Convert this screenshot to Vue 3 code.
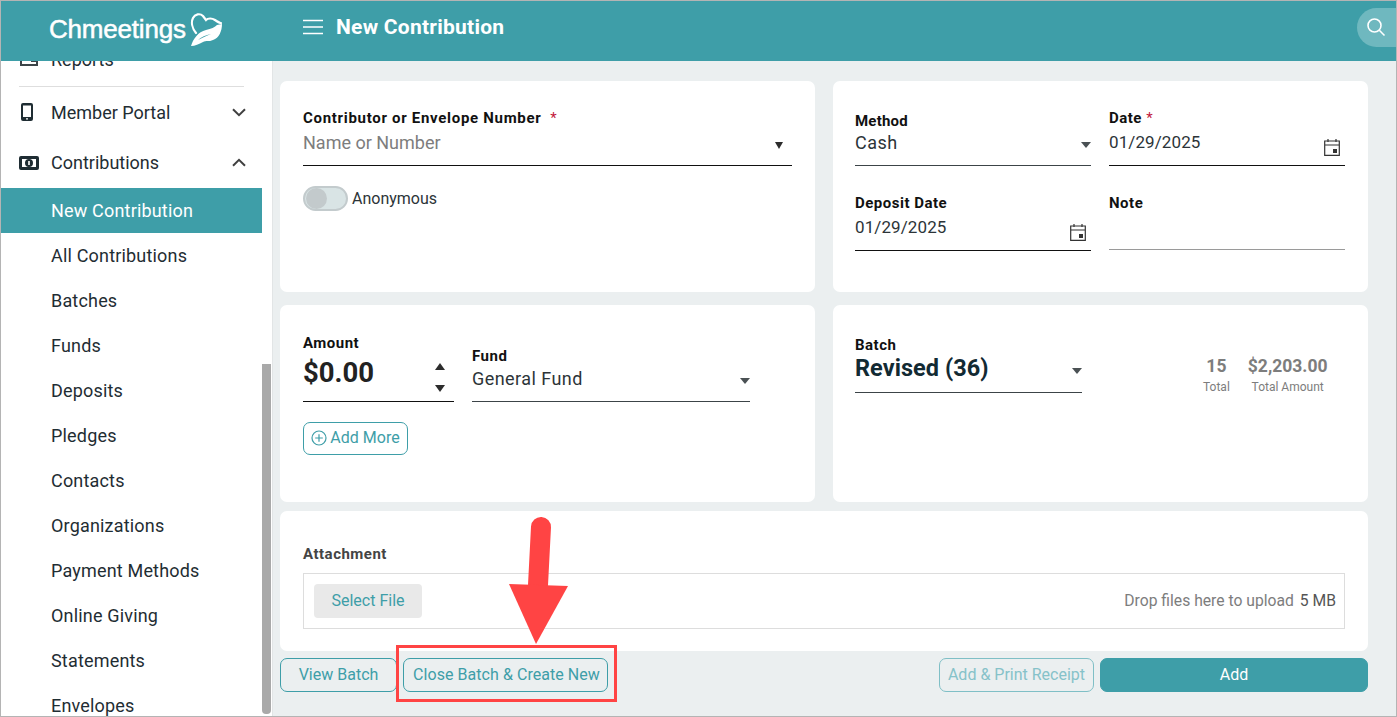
<template>
  <div class="page">
    <!-- Top bar -->
    <header class="topbar">
      <div class="logo">
        <span class="logo-text">Chmeetings</span>
        <svg class="logo-mark" viewBox="0 0 32 33" width="32" height="33">
          <path d="M6 20 C2 15 1 9 3 5 C5 1 10 0 13 3 L16 7 C18 5 22 5 25 7 C28 9 30 10 31 10" fill="none" stroke="#fff" stroke-width="2.2" stroke-linecap="round" />
          <path d="M1 33 C3 26 8 19 16 17 C21 16 25 14 27 12 L32 11 C32 18 29 25 23 27 C19 29 16 27 13 29 C9 31 5 33 1 33 Z M8 27 C12 25 16 23 21 21 C16 22 11 24 8 27 Z" fill="#fff" fill-rule="evenodd" />
        </svg>
      </div>
      <div class="title-wrap">
        <svg class="burger" viewBox="0 0 20 16" width="20" height="16">
          <path d="M0 1.5H20M0 8H20M0 14.5H20" stroke="#fff" stroke-width="1.7" />
        </svg>
        <span class="page-title">New Contribution</span>
      </div>
      <div class="search-pill">
        <svg viewBox="0 0 20 20" width="20" height="20">
          <circle cx="8.5" cy="8.5" r="6.5" fill="none" stroke="#fff" stroke-width="1.6" />
          <path d="M13.3 13.3L18.5 18.5" stroke="#fff" stroke-width="1.6" />
        </svg>
      </div>
    </header>

    <div class="body">
      <!-- Sidebar -->
      <aside class="sidebar">
        <nav class="nav">
          <div class="nav-row reports">
            <svg viewBox="0 0 20 20" width="20" height="20">
              <path d="M2 3H13V12H18V16H2Z" fill="none" stroke="#3c4448" stroke-width="2" />
              <path d="M5 11H11" stroke="#3c4448" stroke-width="2" />
            </svg>
            <span>Reports</span>
          </div>
          <div class="divider"></div>
          <div class="nav-row portal">
            <svg viewBox="0 0 20 20" width="20" height="20">
              <path fill-rule="evenodd" d="M4 1H12Q14 1 14 3V17Q14 19 12 19H4Q2 19 2 17V3Q2 1 4 1ZM4 3.5V15H12V3.5ZM7 16.2V17.6H9V16.2Z" fill="#1f2d33" />
            </svg>
            <span>Member Portal</span>
            <svg class="chev" viewBox="0 0 14 9" width="14" height="9"><path d="M1 1.2L7 7.2L13 1.2" fill="none" stroke="#404040" stroke-width="2" /></svg>
          </div>
          <div class="nav-row">
            <svg viewBox="0 0 20 14" width="20" height="14">
              <path fill-rule="evenodd" d="M2 0H18Q20 0 20 2V12Q20 14 18 14H2Q0 14 0 12V2Q0 0 2 0ZM3 3V11H17V3ZM10 3A4 4 0 1 1 10 11A4 4 0 1 1 10 3ZM9.200 5V9H10.800V5Z" fill="#1f2d33" />
            </svg>
            <span>Contributions</span>
            <svg class="chev" viewBox="0 0 14 9" width="14" height="9"><path d="M1 7.8L7 1.8L13 7.8" fill="none" stroke="#404040" stroke-width="2" /></svg>
          </div>
          <a
            v-for="item in subItems"
            :key="item"
            class="sub-row"
            :class="{ active: item === 'New Contribution' }"
          >{{ item }}</a>
        </nav>
        <div class="scroll-track"><div class="scroll-thumb"></div></div>
      </aside>

      <!-- Main form -->
      <main class="main">
        <div class="grid">
          <section class="card contributor">
            <div class="field">
              <label class="wide">Contributor or Envelope Number <em class="req">&nbsp;*</em></label>
              <div class="control placeholder">
                <span>Name or Number</span>
                <i class="caret dark low"></i>
              </div>
            </div>
            <div class="toggle-row">
              <span class="toggle"><span class="knob"></span></span>
              <span>Anonymous</span>
            </div>
          </section>

          <section class="card details">
            <div class="field method">
              <label>Method</label>
              <div class="control soft"><span>Cash</span><i class="caret"></i></div>
            </div>
            <div class="field date">
              <label>Date <em class="req">*</em></label>
              <div class="control date-text">
                <span>01/29/2025</span>
                <svg class="cal" viewBox="0 0 16 18" width="16" height="18">
                  <path d="M.7 3H15.3V17.3H.7ZM.7 7H15.3M4 1V4M12 1V4" fill="none" stroke="#333" stroke-width="1.2" />
                  <rect x="9" y="11" width="4" height="4" fill="#333" />
                </svg>
              </div>
            </div>
            <div class="field lower">
              <label>Deposit Date</label>
              <div class="control date-text">
                <span>01/29/2025</span>
                <svg class="cal" viewBox="0 0 16 18" width="16" height="18">
                  <path d="M.7 3H15.3V17.3H.7ZM.7 7H15.3M4 1V4M12 1V4" fill="none" stroke="#333" stroke-width="1.2" />
                  <rect x="9" y="11" width="4" height="4" fill="#333" />
                </svg>
              </div>
            </div>
            <div class="field lower">
              <label>Note</label>
              <div class="control empty"></div>
            </div>
          </section>

          <section class="card amounts">
            <div class="amount-row">
              <div class="field amount">
                <label>Amount</label>
                <div class="control big">
                  <span>$0.00</span>
                  <span class="spin"><i class="up"></i><i class="down"></i></span>
                </div>
              </div>
              <div class="field fund">
                <label>Fund</label>
                <div class="control soft"><span>General Fund</span><i class="caret"></i></div>
              </div>
            </div>
            <button class="btn add-more">
              <svg viewBox="0 0 16 16" width="16" height="16">
                <circle cx="8" cy="8" r="7" fill="none" stroke="#3e9ea8" stroke-width="1.2" />
                <path d="M8 4.2V11.8M4.2 8H11.8" stroke="#3e9ea8" stroke-width="1.2" />
              </svg>
              Add More
            </button>
          </section>

          <section class="card batch">
            <div class="field batch-field">
              <label>Batch</label>
              <div class="control soft batch-value"><span>Revised (36)</span><i class="caret"></i></div>
            </div>
            <div class="stats">
              <div v-for="s in stats" :key="s.label" class="stat">
                <strong>{{ s.value }}</strong>
                <span>{{ s.label }}</span>
              </div>
            </div>
          </section>
        </div>

        <section class="card attachment">
          <div class="attach-label">Attachment</div>
          <div class="dropzone">
            <button class="select-file">Select File</button>
            <div class="drop-hint">Drop files here to upload <b>5 MB</b></div>
          </div>
        </section>

        <div class="actions">
          <button class="btn view">View Batch</button>
          <button class="btn close">Close Batch &amp; Create New</button>
          <div class="actions-gap"></div>
          <button class="btn print">Add &amp; Print Receipt</button>
          <button class="btn primary">Add</button>
        </div>
      </main>
    </div>

    <!-- Screenshot annotation -->
    <div class="mark-box"></div>
    <svg class="mark-arrow" viewBox="0 0 62 130" width="62" height="130">
      <path d="M34 12L31 70" stroke="#ff4444" stroke-width="20" stroke-linecap="round" fill="none" />
      <path d="M2 69L61 71L29 129Z" fill="#ff4444" />
    </svg>
  </div>
</template>

<script setup>
const subItems = [
  "New Contribution",
  "All Contributions",
  "Batches",
  "Funds",
  "Deposits",
  "Pledges",
  "Contacts",
  "Organizations",
  "Payment Methods",
  "Online Giving",
  "Statements",
  "Envelopes"
];

const stats = [
  { value: "15", label: "Total" },
  { value: "$2,203.00", label: "Total Amount" }
];
</script>

<style>
html,
body {
  margin: 0;
  overflow: hidden;
}
</style>

<style scoped>
.page {
  position: relative;
  width: 1397px;
  height: 717px;
  box-sizing: border-box;
  border: 1px solid #b4b4b4;
  display: flex;
  flex-direction: column;
  overflow: hidden;
  background: #ebeff0;
  font-family: Roboto, "Liberation Sans", sans-serif;
  color: #1f2d33;
}

.topbar {
  flex: 0 0 60px;
  display: flex;
  align-items: center;
  background: #3e9ea8;
  color: #fff;
  position: relative;
  z-index: 2;
}

.logo {
  width: 302px;
  padding-left: 48px;
  box-sizing: border-box;
  display: flex;
  align-items: center;
  gap: 4px;
}

.logo-text {
  font-family: "Liberation Sans", sans-serif;
  font-size: 26px;
  letter-spacing: -0.2px;
  -webkit-text-stroke: 0.5px #fff;
  margin-top: -3px;
}

.logo-mark {
  margin-top: -3px;
}

.title-wrap {
  display: flex;
  align-items: center;
  gap: 13px;
  flex: 1;
  margin-top: -8px;
}

.page-title {
  font-size: 21px;
  font-weight: 700;
  letter-spacing: 0.25px;
}

.search-pill {
  width: 39px;
  height: 39px;
  margin-top: -8px;
  border-radius: 20px 0 0 20px;
  background: #6fb8bf;
  display: flex;
  align-items: center;
  padding-left: 9px;
  box-sizing: border-box;
}

.body {
  flex: 1;
  display: flex;
  min-height: 0;
}

/* Sidebar */
.sidebar {
  width: 271px;
  display: flex;
  background: #fff;
  overflow: hidden;
  border-right: 1px solid #e2e5e6;
  box-sizing: content-box;
}

.nav {
  width: 261px;
  margin-top: -29px;
  flex: none;
}

.nav-row {
  height: 51px;
  display: flex;
  align-items: center;
  padding-left: 18px;
  padding-right: 16px;
  font-size: 18px;
  gap: 12px;
}

.nav-row span {
  flex: 1;
}

.reports {
  height: 54px;
}

.portal {
  height: 50px;
}

.divider {
  height: 1px;
  margin: 0 18px;
  background: #dedede;
}

.sub-row {
  display: block;
  height: 45px;
  line-height: 45px;
  padding-left: 50px;
  font-size: 18px;
  letter-spacing: 0.18px;
}

.sub-row.active {
  background: #3e9ea8;
  color: #fff;
}

.scroll-track {
  width: 10px;
  flex: none;
  padding-top: 303px;
  box-sizing: border-box;
}

.scroll-thumb {
  width: 9px;
  height: 350px;
  margin-left: 0;
  background: #a9a9a9;
  border-radius: 0 0 4px 4px;
}

/* Main column */
.main {
  flex: 1;
  padding: 20px 28px 0 7px;
  box-sizing: border-box;
  min-width: 0;
}

.grid {
  display: grid;
  grid-template-columns: 535px 535px;
  grid-template-rows: 211px 197px;
  column-gap: 18px;
  row-gap: 13px;
}

.card {
  background: #fff;
  border-radius: 7px;
  box-sizing: border-box;
}

.field label {
  display: block;
  font-size: 15px;
  font-weight: 700;
  letter-spacing: 0.5px;
  line-height: 16px;
  color: #111;
}

.field label.wide {
  letter-spacing: 0.7px;
}

.req {
  color: #c2183c;
  font-style: normal;
  font-weight: 400;
}

.control {
  position: relative;
  display: flex;
  justify-content: space-between;
  align-items: center;
  height: 39px;
  border-bottom: 1px solid #111;
  box-sizing: content-box;
  font-size: 18px;
  letter-spacing: 0.45px;
  color: #2c3438;
}

.control > span:first-child {
  margin-top: -7px;
}

.control.soft {
  border-bottom-color: #3c4448;
}

.control.empty {
  border-bottom-color: #9a9a9a;
}

.control.placeholder {
  color: #7d7d7d;
  letter-spacing: 0;
}

.control.date-text {
  font-size: 17px;
  letter-spacing: 0.1px;
}

.caret {
  width: 0;
  height: 0;
  margin-top: -4px;
  border-left: 5.500px solid transparent;
  border-right: 5.500px solid transparent;
  border-top: 6px solid #4a5154;
}

.caret.dark {
  border-left-width: 4.500px;
  border-right-width: 4.500px;
  border-top: 7px solid #2c2c2c;
  margin-right: 9px;
}

.caret.low {
  margin-top: 0;
}

.cal {
  margin-right: 5px;
  margin-top: 2px;
}

/* Contributor card */
.contributor {
  padding: 29px 23px 0;
}

.toggle-row {
  display: flex;
  align-items: center;
  gap: 4px;
  margin-top: 20px;
  font-size: 16px;
  color: #2c3438;
}

.toggle {
  width: 45px;
  height: 25px;
  box-sizing: border-box;
  border: 2px solid #c3cbcd;
  border-radius: 13px;
  background: #d9e4e5;
  display: flex;
  align-items: center;
  padding-left: 1px;
}

.knob {
  width: 21px;
  height: 21px;
  border-radius: 50%;
  background: #c3cacc;
}

/* Details card */
.details {
  padding: 29px 23px 0 22px;
  display: grid;
  grid-template-columns: 236px 236px;
  column-gap: 18px;
  grid-template-rows: 84px 85px;
  align-content: start;
}

.details .method label {
  margin-top: 3px;
  letter-spacing: 0.2px;
}

.details .method .control {
  height: 36px;
}

.details .method .control > span:first-child {
  margin-top: -9px;
}

.details .lower label {
  margin-top: 1px;
}

.details .lower .control {
  height: 39px;
}

.details .lower .control.empty {
  height: 38px;
}

/* Amount card */
.amounts {
  padding: 30px 23px 0;
}

.amount-row {
  display: flex;
  align-items: flex-end;
  gap: 18px;
}

.amount {
  width: 151px;
}

.fund {
  width: 278px;
}

.fund .control {
  height: 37px;
}

.fund .control > span:first-child {
  margin-top: -9px;
}

.control.big {
  height: 50px;
  font-size: 27.500px;
  font-weight: 700;
  letter-spacing: 0;
  color: #222;
}

.control.big > span:first-child {
  margin-top: -8px;
}

.spin {
  display: flex;
  flex-direction: column;
  gap: 15px;
  margin-right: 9px;
  margin-top: 3px;
}

.spin i {
  display: block;
  width: 0;
  height: 0;
  border-left: 5px solid transparent;
  border-right: 5px solid transparent;
}

.spin .up {
  border-bottom: 7px solid #2c2c2c;
}

.spin .down {
  border-top: 7px solid #2c2c2c;
}

/* Buttons */
.btn {
  font-family: Roboto, "Liberation Sans", sans-serif;
  font-size: 16px;
  background: transparent;
  border: 1px solid #3e9ea8;
  border-radius: 7px;
  color: #3e9ea8;
  height: 34px;
  padding: 0 0 2px;
  box-sizing: border-box;
}

.add-more {
  margin-top: 20px;
  width: 105px;
  height: 33px;
  display: flex;
  align-items: center;
  justify-content: center;
  gap: 3px;
}

/* Batch card */
.batch {
  padding: 32px 23px 0 22px;
  display: flex;
  align-items: flex-start;
}

.batch-field {
  width: 227px;
}

.control.batch-value {
  height: 39px;
  font-size: 23.500px;
  font-weight: 700;
  letter-spacing: 0.05px;
  color: #122a33;
}

.control.batch-value > span:first-child {
  margin-top: -9px;
}

.stats {
  display: flex;
  gap: 18px;
  margin-left: 121px;
  margin-top: 19px;
}

.stat {
  display: flex;
  flex-direction: column;
  align-items: center;
  gap: 3px;
  color: #7d7d7d;
}

.stat strong {
  font-size: 17.500px;
  line-height: 21px;
}

.stat span {
  font-size: 12px;
  line-height: 14px;
}

/* Attachment */
.attachment {
  margin-top: 9px;
  width: 1088px;
  height: 140px;
  padding: 35px 23px 0;
}

.attach-label {
  font-size: 15px;
  font-weight: 700;
  letter-spacing: 0.5px;
  line-height: 17px;
  color: #444;
}

.dropzone {
  margin-top: 10px;
  height: 56px;
  box-sizing: border-box;
  border: 1px solid #ddd;
  display: flex;
  align-items: center;
  justify-content: space-between;
  padding: 0 9px 0 10px;
}

.select-file {
  width: 108px;
  height: 34px;
  border: 0;
  padding: 0 0 2px;
  border-radius: 4px;
  background: #e9e9e9;
  color: #3e9ea8;
  font-family: Roboto, "Liberation Sans", sans-serif;
  font-size: 16px;
}

.drop-hint {
  font-size: 15.700px;
  color: #7d7d7d;
  margin-right: -1px;
  margin-top: -2px;
}

.drop-hint b {
  font-weight: 400;
  color: #555;
  margin-left: 2px;
}

/* Bottom actions */
.actions {
  margin-top: 7px;
  width: 1088px;
  display: flex;
  gap: 6px;
}

.actions-gap {
  flex: 1;
}

.view {
  width: 117px;
}

.close {
  width: 205px;
  padding-left: 2px;
  letter-spacing: 0.05px;
}

.print {
  width: 155px;
  border-color: #7fbfc6;
  color: #86c2c9;
}

.primary {
  width: 268px;
  background: #3e9ea8;
  color: #fff;
}

/* Annotation drawn over the screenshot */
.mark-box {
  position: absolute;
  left: 395px;
  top: 644px;
  width: 221px;
  height: 57px;
  box-sizing: border-box;
  border: 3px solid #ff4444;
}

.mark-arrow {
  position: absolute;
  left: 506px;
  top: 514px;
}
</style>
